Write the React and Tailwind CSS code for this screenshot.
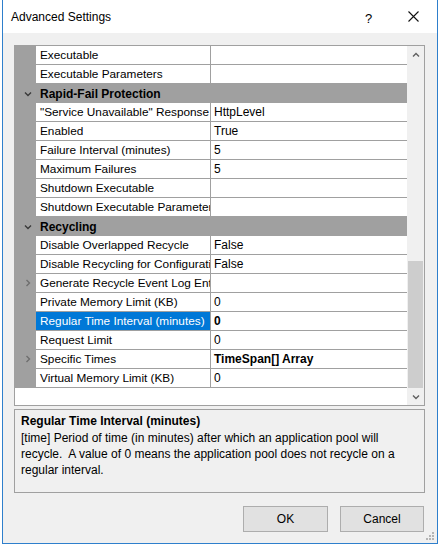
import React from 'react';

const rows = [
  { name: 'Executable', value: '' },
  { name: 'Executable Parameters', value: '' },
  { cat: 'Rapid-Fail Protection' },
  { name: '"Service Unavailable" Response Type', value: 'HttpLevel' },
  { name: 'Enabled', value: 'True' },
  { name: 'Failure Interval (minutes)', value: '5' },
  { name: 'Maximum Failures', value: '5' },
  { name: 'Shutdown Executable', value: '' },
  { name: 'Shutdown Executable Parameters', value: '' },
  { cat: 'Recycling' },
  { name: 'Disable Overlapped Recycle', value: 'False' },
  { name: 'Disable Recycling for Configuration Changes', value: 'False' },
  { name: 'Generate Recycle Event Log Entry', value: '', expand: true },
  { name: 'Private Memory Limit (KB)', value: '0' },
  { name: 'Regular Time Interval (minutes)', value: '0', selected: true, bold: true },
  { name: 'Request Limit', value: '0' },
  { name: 'Specific Times', value: 'TimeSpan[] Array', expand: true, bold: true },
  { name: 'Virtual Memory Limit (KB)', value: '0' },
];

function Chevron({ dir, className }) {
  const d = {
    down: 'M1 1.5 L4 4.5 L7 1.5',
    right: 'M1.5 1 L4.5 4 L1.5 7',
    up: 'M1 4.5 L4 1.5 L7 4.5',
  }[dir];
  const box = dir === 'right' ? '0 0 6 8' : '0 0 8 6';
  return (
    <svg viewBox={box} className={className} fill="none" stroke="currentColor" strokeWidth="1.4">
      <path d={d} />
    </svg>
  );
}

function Row({ row }) {
  if (row.cat) {
    return (
      <div className="flex h-[19px] items-center bg-[#a0a0a0]">
        <div className="w-[21px] flex justify-center">
          <Chevron dir="down" className="w-[8px] h-[6px] text-[#3a3a3a] ml-[4px]" />
        </div>
        <div className="pl-[4px] pt-[1px] font-bold leading-[18px]">{row.cat}</div>
      </div>
    );
  }
  return (
    <div className="flex h-[19px] border-b border-[#a0a0a0]">
      <div className="w-[21px] shrink-0 bg-[#a0a0a0] flex items-center justify-center">
        {row.expand && <Chevron dir="right" className="w-[6px] h-[8px] text-[#6e6e6e] ml-[4px]" />}
      </div>
      <div
        className={
          'w-[175px] shrink-0 border-r border-[#a0a0a0] pl-[4px] pt-[1px] leading-[17px] text-[11.8px] whitespace-nowrap overflow-hidden ' +
          (row.selected ? 'bg-[#0078d7] text-white' : 'bg-white')
        }
      >
        {row.name}
      </div>
      <div className={'flex-1 bg-white pl-[3px] pt-[1px] leading-[17px] whitespace-nowrap overflow-hidden ' + (row.bold ? 'font-bold' : '')}>
        {row.value}
      </div>
    </div>
  );
}

export default function App() {
  return (
    <div className="w-[438px] h-[547px] bg-white overflow-hidden font-['Liberation_Sans',Arial,sans-serif] text-[12px] text-black">
      <div className="relative ml-[2px] w-[436px] h-[544px] border-x border-b border-[#2e7fcc] flex flex-col">
        {/* title bar */}
        <div className="h-[33px] bg-white flex items-center relative">
          <div className="pl-[8px] text-[12px] pt-[1px]">Advanced Settings</div>
          <div className="absolute left-[362px] top-[9px] text-[13px]">?</div>
          <svg className="absolute left-[405px] top-[11px] w-[11px] h-[11px]" viewBox="0 0 11 11" stroke="#111" strokeWidth="1.1">
            <path d="M0.5 0.5 L10.5 10.5 M10.5 0.5 L0.5 10.5" />
          </svg>
        </div>

        <div className="flex-1 bg-[#f0f0f0] pl-[11px] pr-[12px] pt-[12px] flex flex-col">
          {/* property grid */}
          <div className="h-[361px] border border-[#a0a0a0] flex bg-white">
            <div className="flex-1">
              {rows.map((r, i) => (
                <Row key={i} row={r} />
              ))}
            </div>
            <div className="w-[17px] bg-[#f0f0f0] flex flex-col">
              <div className="h-[18px] flex items-center justify-center">
                <Chevron dir="up" className="w-[8px] h-[6px] text-[#606060]" />
              </div>
              <div className="h-[197px]" />
              <div className="flex-1 bg-[#cdcdcd] mx-[1px]" />
              <div className="h-[17px] flex items-center justify-center">
                <Chevron dir="down" className="w-[8px] h-[6px] text-[#606060]" />
              </div>
            </div>
          </div>

          {/* description */}
          <div className="mt-[3px] h-[84px] border border-[#a0a0a0] pl-[6px] pt-[3px]">
            <div className="font-bold leading-[16px]">Regular Time Interval (minutes)</div>
            <div className="mt-[1px] leading-[16px] whitespace-pre">
              {'[time] Period of time (in minutes) after which an application pool will\nrecycle.  A value of 0 means the application pool does not recycle on a\nregular interval.'}
            </div>
          </div>

          {/* buttons */}
          <div className="mt-[13px] flex justify-end gap-[12px] pr-[1px]">
            <button className="w-[85px] h-[26px] bg-[#e1e1e1] border border-[#adadad]">OK</button>
            <button className="w-[84px] h-[26px] bg-[#e1e1e1] border border-[#adadad]">Cancel</button>
          </div>
        </div>

        <svg className="absolute right-[3px] bottom-[3px] w-[9px] h-[9px]" viewBox="0 0 9 9" fill="#b4b4b4">
          <rect x="7" y="1" width="2" height="2" />
          <rect x="4" y="4" width="2" height="2" />
          <rect x="7" y="4" width="2" height="2" />
          <rect x="1" y="7" width="2" height="2" />
          <rect x="4" y="7" width="2" height="2" />
          <rect x="7" y="7" width="2" height="2" />
        </svg>
      </div>
    </div>
  );
}
